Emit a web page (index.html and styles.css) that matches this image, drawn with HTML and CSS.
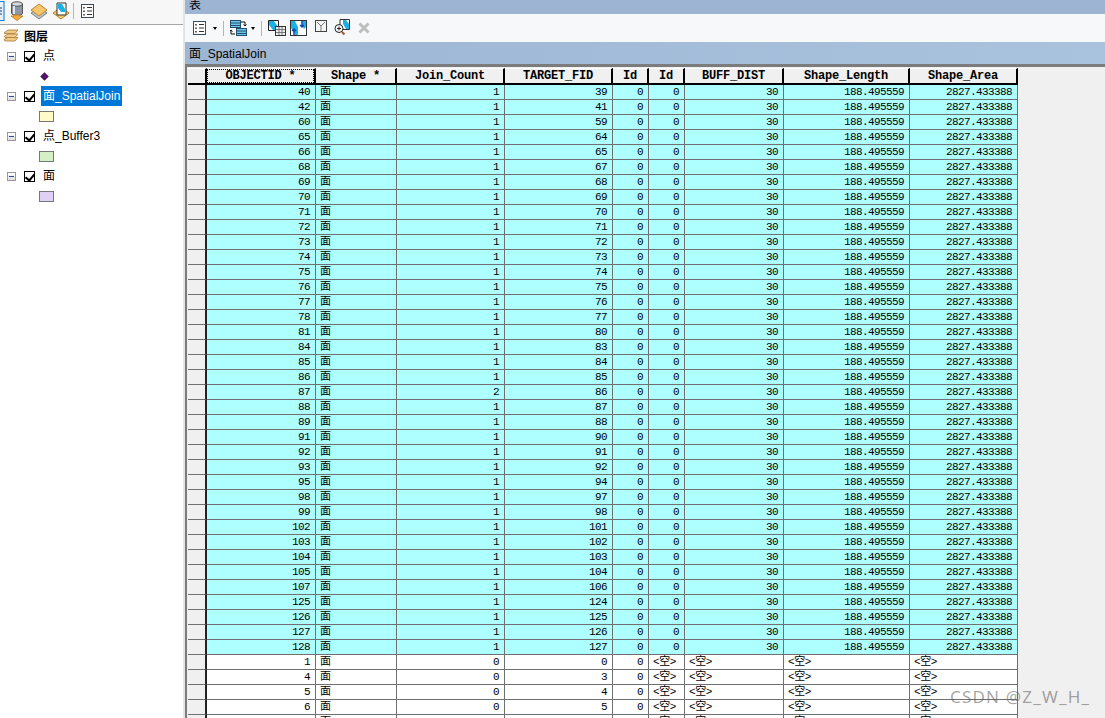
FILE: index.html
```html
<!DOCTYPE html>
<html lang="zh">
<head>
<meta charset="utf-8">
<title>表 - 面_SpatialJoin</title>
<link rel="stylesheet" href="styles.css">
</head>
<body>
<div class="app">
  <aside class="toc">
    <div class="toc-bar">
      <svg class="i-cut" width="5" height="20" viewBox="0 0 5 20"><rect x="-6" y="0.5" width="10" height="19" fill="#e5f1fb" stroke="#0078d7"/><path d="M0 7h2M0 10h2M0 13h2" stroke="#1a3a6a"/></svg>
      <svg class="i-db" width="14" height="20" viewBox="0 0 14 20"><path d="M1.500 3v9c0 1.500 2.500 2.500 5.500 2.500s5.500-1 5.500-2.500V3z" fill="#8d97a3" stroke="#555"/><ellipse cx="7" cy="3" rx="5.500" ry="2.200" fill="#d5dbe2" stroke="#555"/><path d="M4 5v8" stroke="#dfe5ea" stroke-width="2"/><path d="M4 14h6v1h3l-6 4.500L1 15h3z" fill="#f2a93c" stroke="#b5741a" stroke-width=".7"/></svg>
      <svg class="i-lay" width="18" height="19" viewBox="0 0 18 19"><path d="M1 11l8-5 8 5-8 6z" fill="#bfc4c9" stroke="#7c7f82"/><path d="M1 8l8-6 8 6-8 6z" fill="#f6c66c" stroke="#b88428"/></svg>
      <svg class="i-doc" width="18" height="19" viewBox="0 0 18 19"><path d="M1 11l8-6 8 6-8 6z" fill="#f6c66c" stroke="#b88428"/><path d="M5 1h9v12H5z" fill="#fff" stroke="#333"/><path d="M6 2h4l3 5v3H9L6 6z" fill="#19b1e6"/></svg>
      <span class="bar-sep"></span>
      <svg class="i-list" width="14" height="15" viewBox="0 0 14 15"><rect x=".5" y=".5" width="12" height="13" fill="#fff" stroke="#3a4a5a"/><path d="M6 3.500h5M6 7h5M6 10.500h5" stroke="#333"/><path d="M2 3h2v1.500H2zM2 6.500h2V8H2zM2 10h2v1.500H2z" fill="#666"/></svg>
    </div>
    <ul class="tree">
      <li class="tree-row root">
        <svg width="16" height="15" viewBox="0 0 16 15"><path d="M1 11.500l4-2h10l-3 3.500H2z" fill="#f2c987" stroke="#a77a3a" stroke-width=".8"/><path d="M1 8.500l4-2.500h10l-3 3.500H2z" fill="#f2c987" stroke="#a77a3a" stroke-width=".8"/><path d="M1 5l4-3h10l-3 3.500H2z" fill="#f2c987" stroke="#a77a3a" stroke-width=".8"/></svg>
        <span class="root-label">图层</span>
      </li>
      <li class="tree-row layer"><span class="minus"></span><span class="check"></span><span class="label">点</span></li>
      <li class="tree-row sym"><span class="dot"></span></li>
      <li class="tree-row layer"><span class="minus"></span><span class="check"></span><span class="label selected">面_SpatialJoin</span></li>
      <li class="tree-row sym"><span class="swatch yellow"></span></li>
      <li class="tree-row layer"><span class="minus"></span><span class="check"></span><span class="label">点_Buffer3</span></li>
      <li class="tree-row sym"><span class="swatch green"></span></li>
      <li class="tree-row layer"><span class="minus"></span><span class="check"></span><span class="label">面</span></li>
      <li class="tree-row sym"><span class="swatch purple"></span></li>
    </ul>
  </aside>
  <main class="win">
    <div class="win-title">表</div>
    <div class="win-tools">
      <svg class="t1" width="14" height="15" viewBox="0 0 14 15"><rect x=".5" y=".5" width="12" height="13" fill="#fff" stroke="#3a4a5a"/><path d="M6 3.500h5M6 7h5M6 10.500h5" stroke="#333"/><path d="M2 3h2v1.500H2zM2 6.500h2V8H2zM2 10h2v1.500H2z" fill="#666"/></svg>
      <span class="caret"></span>
      <span class="tool-sep"></span>
      <svg class="t2" width="17" height="16" viewBox="0 0 17 16"><rect x=".5" y=".5" width="10" height="7" fill="#6fc4ea" stroke="#24506e"/><path d="M1 3h9M1 5.500h9" stroke="#24506e"/><rect x="6.500" y="8.500" width="10" height="7" fill="#6fc4ea" stroke="#24506e"/><path d="M7 11h9M7 13.500h9" stroke="#24506e"/><path d="M11 2h4v4M13.500 4.500L15 6l1.500-1.500M5 14H1v-4M-.5 11.500L1 10l1.500 1.500" fill="none" stroke="#111"/></svg>
      <span class="caret near"></span>
      <span class="tool-sep"></span>
      <svg class="t3" width="18" height="16" viewBox="0 0 18 16"><path d="M.5.500h10v10H.5z" fill="#fff" stroke="#222"/><path d="M1 1h5l4 6v3H5L1 5z" fill="#19b1e6"/><rect x="7.500" y="6.500" width="10" height="9" fill="#eee" stroke="#333"/><path d="M8 9.500h9M8 12.500h9M11 7v8M14 7v8" stroke="#777"/></svg>
      <svg class="t4" width="17" height="16" viewBox="0 0 17 16"><rect x=".5" y=".5" width="16" height="15" fill="#fff" stroke="#333"/><path d="M1 1h4l3 6v8H5L1 8zM12 1h4v6l-2 2-2-4z" fill="#19b1e6"/><path d="M4 15V9M2 11l2-2 2 2" fill="none" stroke="#1849a9" stroke-width="1.500"/><path d="M12 1v6M10 5l2 2 2-2" fill="none" stroke="#1849a9" stroke-width="1.500"/></svg>
      <svg class="t5" width="12" height="12" viewBox="0 0 12 12"><rect x=".5" y=".5" width="11" height="11" fill="#f4f4f4" stroke="#444"/><path d="M2 2l4 4 4-4M6 6v5" fill="none" stroke="#777"/></svg>
      <svg class="t6" width="16" height="16" viewBox="0 0 16 16"><path d="M6 .5h9.500v10H6z" fill="#fff" stroke="#333"/><path d="M9 1h3l3 4v5h-3L9 5z" fill="#19b1e6"/><circle cx="5" cy="9.500" r="4" fill="#fff" stroke="#222"/><path d="M3 9.500h4M5 7.500v4" stroke="#222"/><path d="M8 13l2.500 2.500" stroke="#a5552a" stroke-width="2"/></svg>
      <svg class="t7" width="12" height="12" viewBox="0 0 12 12"><path d="M1.500 1.500l9 9M10.500 1.500l-9 9" stroke="#bdbdbd" stroke-width="3"/></svg>
    </div>
    <div class="win-sub">面_SpatialJoin</div>
    <div class="grid-wrap">
      <table class="grid">
        <colgroup><col class="c0"><col class="c1"><col class="c2"><col class="c3"><col class="c3"><col class="c4"><col class="c4"><col class="c5"><col class="c6"><col class="c3"></colgroup>
        <thead>
          <tr><th></th><th class="active"><span>OBJECTID *</span></th><th>Shape *</th><th>Join_Count</th><th>TARGET_FID</th><th>Id</th><th>Id</th><th>BUFF_DIST</th><th>Shape_Length</th><th>Shape_Area</th></tr>
        </thead>
        <tbody>
          <tr class="hit"><th></th><td>40</td><td>面</td><td>1</td><td>39</td><td>0</td><td>0</td><td>30</td><td>188.495559</td><td>2827.433388</td></tr>
          <tr class="hit"><th></th><td>42</td><td>面</td><td>1</td><td>41</td><td>0</td><td>0</td><td>30</td><td>188.495559</td><td>2827.433388</td></tr>
          <tr class="hit"><th></th><td>60</td><td>面</td><td>1</td><td>59</td><td>0</td><td>0</td><td>30</td><td>188.495559</td><td>2827.433388</td></tr>
          <tr class="hit"><th></th><td>65</td><td>面</td><td>1</td><td>64</td><td>0</td><td>0</td><td>30</td><td>188.495559</td><td>2827.433388</td></tr>
          <tr class="hit"><th></th><td>66</td><td>面</td><td>1</td><td>65</td><td>0</td><td>0</td><td>30</td><td>188.495559</td><td>2827.433388</td></tr>
          <tr class="hit"><th></th><td>68</td><td>面</td><td>1</td><td>67</td><td>0</td><td>0</td><td>30</td><td>188.495559</td><td>2827.433388</td></tr>
          <tr class="hit"><th></th><td>69</td><td>面</td><td>1</td><td>68</td><td>0</td><td>0</td><td>30</td><td>188.495559</td><td>2827.433388</td></tr>
          <tr class="hit"><th></th><td>70</td><td>面</td><td>1</td><td>69</td><td>0</td><td>0</td><td>30</td><td>188.495559</td><td>2827.433388</td></tr>
          <tr class="hit"><th></th><td>71</td><td>面</td><td>1</td><td>70</td><td>0</td><td>0</td><td>30</td><td>188.495559</td><td>2827.433388</td></tr>
          <tr class="hit"><th></th><td>72</td><td>面</td><td>1</td><td>71</td><td>0</td><td>0</td><td>30</td><td>188.495559</td><td>2827.433388</td></tr>
          <tr class="hit"><th></th><td>73</td><td>面</td><td>1</td><td>72</td><td>0</td><td>0</td><td>30</td><td>188.495559</td><td>2827.433388</td></tr>
          <tr class="hit"><th></th><td>74</td><td>面</td><td>1</td><td>73</td><td>0</td><td>0</td><td>30</td><td>188.495559</td><td>2827.433388</td></tr>
          <tr class="hit"><th></th><td>75</td><td>面</td><td>1</td><td>74</td><td>0</td><td>0</td><td>30</td><td>188.495559</td><td>2827.433388</td></tr>
          <tr class="hit"><th></th><td>76</td><td>面</td><td>1</td><td>75</td><td>0</td><td>0</td><td>30</td><td>188.495559</td><td>2827.433388</td></tr>
          <tr class="hit"><th></th><td>77</td><td>面</td><td>1</td><td>76</td><td>0</td><td>0</td><td>30</td><td>188.495559</td><td>2827.433388</td></tr>
          <tr class="hit"><th></th><td>78</td><td>面</td><td>1</td><td>77</td><td>0</td><td>0</td><td>30</td><td>188.495559</td><td>2827.433388</td></tr>
          <tr class="hit"><th></th><td>81</td><td>面</td><td>1</td><td>80</td><td>0</td><td>0</td><td>30</td><td>188.495559</td><td>2827.433388</td></tr>
          <tr class="hit"><th></th><td>84</td><td>面</td><td>1</td><td>83</td><td>0</td><td>0</td><td>30</td><td>188.495559</td><td>2827.433388</td></tr>
          <tr class="hit"><th></th><td>85</td><td>面</td><td>1</td><td>84</td><td>0</td><td>0</td><td>30</td><td>188.495559</td><td>2827.433388</td></tr>
          <tr class="hit"><th></th><td>86</td><td>面</td><td>1</td><td>85</td><td>0</td><td>0</td><td>30</td><td>188.495559</td><td>2827.433388</td></tr>
          <tr class="hit"><th></th><td>87</td><td>面</td><td>2</td><td>86</td><td>0</td><td>0</td><td>30</td><td>188.495559</td><td>2827.433388</td></tr>
          <tr class="hit"><th></th><td>88</td><td>面</td><td>1</td><td>87</td><td>0</td><td>0</td><td>30</td><td>188.495559</td><td>2827.433388</td></tr>
          <tr class="hit"><th></th><td>89</td><td>面</td><td>1</td><td>88</td><td>0</td><td>0</td><td>30</td><td>188.495559</td><td>2827.433388</td></tr>
          <tr class="hit"><th></th><td>91</td><td>面</td><td>1</td><td>90</td><td>0</td><td>0</td><td>30</td><td>188.495559</td><td>2827.433388</td></tr>
          <tr class="hit"><th></th><td>92</td><td>面</td><td>1</td><td>91</td><td>0</td><td>0</td><td>30</td><td>188.495559</td><td>2827.433388</td></tr>
          <tr class="hit"><th></th><td>93</td><td>面</td><td>1</td><td>92</td><td>0</td><td>0</td><td>30</td><td>188.495559</td><td>2827.433388</td></tr>
          <tr class="hit"><th></th><td>95</td><td>面</td><td>1</td><td>94</td><td>0</td><td>0</td><td>30</td><td>188.495559</td><td>2827.433388</td></tr>
          <tr class="hit"><th></th><td>98</td><td>面</td><td>1</td><td>97</td><td>0</td><td>0</td><td>30</td><td>188.495559</td><td>2827.433388</td></tr>
          <tr class="hit"><th></th><td>99</td><td>面</td><td>1</td><td>98</td><td>0</td><td>0</td><td>30</td><td>188.495559</td><td>2827.433388</td></tr>
          <tr class="hit"><th></th><td>102</td><td>面</td><td>1</td><td>101</td><td>0</td><td>0</td><td>30</td><td>188.495559</td><td>2827.433388</td></tr>
          <tr class="hit"><th></th><td>103</td><td>面</td><td>1</td><td>102</td><td>0</td><td>0</td><td>30</td><td>188.495559</td><td>2827.433388</td></tr>
          <tr class="hit"><th></th><td>104</td><td>面</td><td>1</td><td>103</td><td>0</td><td>0</td><td>30</td><td>188.495559</td><td>2827.433388</td></tr>
          <tr class="hit"><th></th><td>105</td><td>面</td><td>1</td><td>104</td><td>0</td><td>0</td><td>30</td><td>188.495559</td><td>2827.433388</td></tr>
          <tr class="hit"><th></th><td>107</td><td>面</td><td>1</td><td>106</td><td>0</td><td>0</td><td>30</td><td>188.495559</td><td>2827.433388</td></tr>
          <tr class="hit"><th></th><td>125</td><td>面</td><td>1</td><td>124</td><td>0</td><td>0</td><td>30</td><td>188.495559</td><td>2827.433388</td></tr>
          <tr class="hit"><th></th><td>126</td><td>面</td><td>1</td><td>125</td><td>0</td><td>0</td><td>30</td><td>188.495559</td><td>2827.433388</td></tr>
          <tr class="hit"><th></th><td>127</td><td>面</td><td>1</td><td>126</td><td>0</td><td>0</td><td>30</td><td>188.495559</td><td>2827.433388</td></tr>
          <tr class="hit"><th></th><td>128</td><td>面</td><td>1</td><td>127</td><td>0</td><td>0</td><td>30</td><td>188.495559</td><td>2827.433388</td></tr>
          <tr><th></th><td>1</td><td>面</td><td>0</td><td>0</td><td>0</td><td class="null">&lt;空&gt;</td><td class="null">&lt;空&gt;</td><td class="null">&lt;空&gt;</td><td class="null">&lt;空&gt;</td></tr>
          <tr><th></th><td>4</td><td>面</td><td>0</td><td>3</td><td>0</td><td class="null">&lt;空&gt;</td><td class="null">&lt;空&gt;</td><td class="null">&lt;空&gt;</td><td class="null">&lt;空&gt;</td></tr>
          <tr><th></th><td>5</td><td>面</td><td>0</td><td>4</td><td>0</td><td class="null">&lt;空&gt;</td><td class="null">&lt;空&gt;</td><td class="null">&lt;空&gt;</td><td class="null">&lt;空&gt;</td></tr>
          <tr><th></th><td>6</td><td>面</td><td>0</td><td>5</td><td>0</td><td class="null">&lt;空&gt;</td><td class="null">&lt;空&gt;</td><td class="null">&lt;空&gt;</td><td class="null">&lt;空&gt;</td></tr>
          <tr><th></th><td>7</td><td>面</td><td>0</td><td>6</td><td>0</td><td class="null">&lt;空&gt;</td><td class="null">&lt;空&gt;</td><td class="null">&lt;空&gt;</td><td class="null">&lt;空&gt;</td></tr>
        </tbody>
      </table>
    </div>
  </main>
  <div class="mark">CSDN @Z_W_H_</div>
</div>
</body>
</html>
```

FILE: styles.css
```css
* { box-sizing: border-box; }
html, body { margin: 0; height: 100%; overflow: hidden; background: #fff; }
body { font-family: "Liberation Sans", "Noto Sans CJK SC", sans-serif; font-size: 12px; color: #000; }
.app { display: flex; height: 718px; position: relative; overflow: hidden; }

.toc { width: 185px; flex: none; background: #fff; border-right: 2px solid #e4e4e4; }
.toc-bar { display: flex; align-items: center; height: 25px; border-bottom: 1px solid #a5a5a5; background: #f7f7f7; padding-bottom: 2px; }
.i-cut { margin-right: 5px; }
.i-db { margin-right: 6px; }
.i-lay { margin-right: 4px; }
.i-doc { margin-right: 3px; }
.bar-sep { width: 1px; height: 16px; background: #b5b5b5; margin-right: 7px; }
.tree { list-style: none; margin: 0; padding: 0; }
.tree-row { display: flex; align-items: center; height: 20px; }
.root { height: 21px; padding-left: 3px; }
.root-label { margin-left: 5px; font-weight: 700; font-size: 12px; }
.layer { padding-left: 7px; }
.minus { width: 9px; height: 9px; border: 1px solid #979797; background: linear-gradient(#fff, #dcdcdc); position: relative; flex: none; }
.minus::after { content: ""; position: absolute; left: 1px; right: 1px; top: 3px; height: 1px; background: #2b4b8c; }
.check { width: 11px; height: 11px; border: 1px solid #000; margin-left: 8px; flex: none; position: relative; background: #fff; }
.check::after { content: ""; position: absolute; left: 2px; top: 0; width: 4px; height: 7px; border: solid #000; border-width: 0 2px 2px 0; transform: rotate(40deg); }
.label { margin-left: 6px; padding: 0 2px; height: 20px; line-height: 20px; font-size: 12px; }
.selected { background: #0078d7; color: #fff; }
.sym { padding-left: 39px; padding-top: 1px; }
.dot { width: 5px; height: 5px; margin-left: 3px; background: #5b0f7a; transform: rotate(45deg); box-shadow: 0 0 0 .5px #222; }
.swatch { width: 15px; height: 11px; border: 1px solid #777; }
.yellow { background: #fefbc8; }
.green { background: #d5f0c5; }
.purple { background: #dfd0f5; }

.win { flex: 1; display: flex; flex-direction: column; min-width: 0; background: #9db6d3; }
.win-title { height: 13px; line-height: 10px; padding-left: 4px; background: #9db5d2; font-size: 12px; }
.win-tools { display: flex; align-items: center; height: 28px; margin-top: 1px; padding-left: 8px; background: #f7f8f9; }
.caret { width: 0; height: 0; border: solid transparent; border-width: 3px 2.5px 0; border-top-color: #000; margin-left: 6px; }
.caret.near { margin-left: 4px; }
.tool-sep { width: 1px; height: 15px; background: #b5b5b5; margin: 0 6px; }
.t4 { margin-left: 4px; }
.t5 { margin-left: 8px; margin-top: -4px; }
.t6 { margin-left: 7px; margin-top: -2px; }
.t7 { margin-left: 8px; }
.win-sub { height: 22px; line-height: 24px; padding-left: 4px; background: linear-gradient(90deg, #9db6d3, #a9c2de); font-size: 12px; }
.grid-wrap { flex: 1; min-height: 0; overflow: hidden; background: #f0f0f0; border-top: 3px solid #7c7c7c; border-left: 2px solid #7c7c7c; padding: 1px 0 0 1px; }

.grid { border-collapse: separate; border-spacing: 0; table-layout: fixed; width: 830px; font-family: "Liberation Mono", "Noto Sans CJK SC", monospace; }
.c0 { width: 19px; }
.c1 { width: 109px; }
.c2 { width: 81px; }
.c3 { width: 108px; }
.c4 { width: 36px; }
.c5 { width: 99px; }
.c6 { width: 126px; }
.grid th, .grid td { height: 15px; padding: 0; overflow: hidden; white-space: nowrap; line-height: 14px; }
.grid thead th { height: 17px; background: #f0f0f0; border-right: 2px solid #000; border-bottom: 2px solid #000; border-top: 1px solid #fff; font-size: 12px; line-height: 14px; font-weight: 700; letter-spacing: -.2px; text-align: center; }
.grid thead th.active { padding: 1px; }
.grid thead th.active span { display: block; outline: 1px dotted #000; height: 12px; line-height: 12px; }
.grid tbody th { background: #f0f0f0; border-right: 2px solid #222; border-bottom: 1px solid #707070; }
.grid td { background: #fff; border-right: 1px solid #707070; border-bottom: 1px solid #707070; font-size: 11px; letter-spacing: -.6px; text-align: right; padding-right: 5px; }
.grid tbody tr.hit td { background: #aeffff; }
.grid td:nth-child(3) { text-align: left; padding: 0 0 0 4px; font-size: 11px; letter-spacing: 0; }
.grid td.null { text-align: left; padding: 0 0 0 4px; font-size: 11px; letter-spacing: -.4px; }

.mark { position: absolute; left: 950px; top: 685px; font-family: "Noto Sans", sans-serif; font-size: 17px; color: rgba(90, 90, 90, .55); letter-spacing: 1.2px; }
```
